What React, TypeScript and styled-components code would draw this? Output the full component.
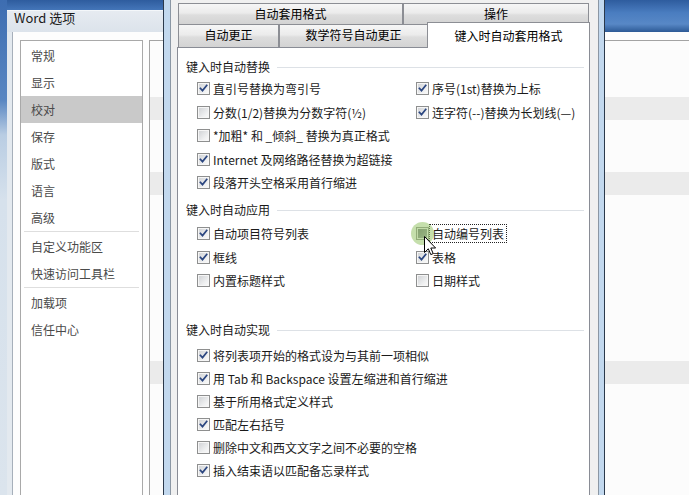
import React from 'react';
import styled, { createGlobalStyle } from 'styled-components';

const GlobalStyle = createGlobalStyle`
  *, *::before, *::after { box-sizing: border-box; }
  html, body { margin: 0; padding: 0; }
  body {
    width: 689px;
    height: 495px;
    overflow: hidden;
    font-family: "Noto Sans CJK SC", "Noto Sans", sans-serif;
    font-size: 12px;
    color: #1a1a1a;
  }
`;

const Screen = styled.div`
  position: relative;
  width: 689px;
  height: 495px;
  overflow: hidden;
`;

/* ---------- background Word Options window ---------- */
const OptionsWindow = styled.div`
  display: flex;
  height: 100%;
`;

const FrameStrip = styled.div`
  width: 7px;
  flex: none;
  background: linear-gradient(#3d6db1 0, #5886c2 100px, #b9cde3 135px, #d6e1ec 200px, #dbe4ed 495px);
`;

const WindowMain = styled.div`
  flex: 1;
  display: flex;
  flex-direction: column;
`;

const TitleBar = styled.div`
  height: 32px;
  flex: none;
  display: flex;
  background: linear-gradient(#2e5c9e, #4a7dc0 40%, #5888c6 75%, #2d5a96);
`;

const TitleGlass = styled.div`
  width: 156px;
  margin-top: 10px;
  padding: 0 0 0 7px;
  background: linear-gradient(#e6ebf1, #dce3eb);
  border-top: 1px solid #f4f7fa;
  font-size: 13px;
  line-height: 13px;
  color: #1b1b1b;
`;

const WindowContent = styled.div`
  flex: 1;
  display: flex;
  background: #e3e9ef;
`;

const ContentInner = styled.div`
  flex: 1;
  display: flex;
  margin-left: 5px;
  padding: 8px 0 0 7px;
  background: #fdfdfd;
  border-left: 1px solid #a6afba;
`;

const Nav = styled.div`
  width: 123px;
  flex: none;
  border: 1px solid #a9a9a9;
  border-bottom: none;
  background: #fff;
  padding-top: 1px;
`;

const NavItem = styled.div<{ $active?: boolean }>`
  height: 27px;
  line-height: 27px;
  padding-left: 10px;
  color: #4a4a4a;
  background: ${(p) => (p.$active ? '#c9c9c9' : 'transparent')};
`;

const NavSeparator = styled.div`
  height: 1px;
  margin: 0 3px 1px;
  background: #dedede;
`;

const OptionsPanel = styled.div`
  flex: 1;
  margin-left: 6px;
  border-left: 1px solid #a3a3a3;
  border-top: 1px solid #a3a3a3;
  background: #fcfcfc;
  padding-top: 56px;
`;

const Band = styled.div<{ $gap: number }>`
  height: 23px;
  margin-top: ${(p) => p.$gap}px;
  background: #ebebeb;
`;

/* ---------- AutoCorrect dialog ---------- */
const Dialog = styled.div`
  position: absolute;
  left: 163px;
  top: 0;
  width: 442px;
  height: 495px;
  border-left: 1px solid #2b394b;
  border-right: 1px solid #2b394b;
  padding: 0 5px 0 6px;
  background: linear-gradient(90deg, #c2d8ee, #d3e4f4 50%, #c2d8ee);
`;

const DialogBody = styled.div`
  height: 100%;
  display: flex;
  flex-direction: column;
  background: #f0f0f0;
  border-left: 1px solid #8b97a4;
  border-right: 1px solid #8b97a4;
  padding: 3px 8px 0 6px;
`;

const TabRow = styled.div<{ $h: number }>`
  display: flex;
  align-items: flex-end;
  height: ${(p) => p.$h}px;
  padding-left: 1px;
`;

const Tab = styled.div<{ $w: number; $active?: boolean }>`
  width: ${(p) => p.$w}px;
  flex: none;
  border: 1px solid #8c8e94;
  border-bottom: none;
  text-align: center;
  color: #000;
  ${(p) =>
    p.$active
      ? `
    height: 26px;
    margin-left: -1px;
    margin-bottom: -1px;
    line-height: 25px;
    background: #fff;
    position: relative;
    z-index: 1;
  `
      : `
    height: 100%;
    line-height: 20px;
    background: linear-gradient(#f6f6f6, #ebebeb 45%, #dddddd 55%, #d3d3d3);
  `}
`;

const TabPage = styled.div`
  flex: 1;
  border: 1px solid #898c95;
  border-bottom: none;
  background: #fff;
  padding-top: 11px;
`;

const SectionHeader = styled.div<{ $gap: number }>`
  display: flex;
  align-items: center;
  height: 16px;
  line-height: 16px;
  margin: ${(p) => p.$gap}px 5px 0 8px;
  color: #1a1a1a;
`;

const Rule = styled.div`
  flex: 1;
  height: 1px;
  margin-left: 7px;
  background: #dde1e6;
`;

const OptionGrid = styled.div<{ $gap: number; $row: number }>`
  display: grid;
  grid-template-columns: 219px 1fr;
  grid-auto-rows: ${(p) => p.$row}px;
  margin-top: ${(p) => p.$gap}px;
  padding-left: 19px;
`;

const Option = styled.div<{ $col?: number }>`
  display: flex;
  align-items: center;
  gap: 3px;
  grid-column: ${(p) => p.$col ?? 1};
  white-space: nowrap;
  color: #1a1a1a;
`;

const Box = styled.span<{ $hover?: boolean }>`
  position: relative;
  flex: none;
  width: 13px;
  height: 13px;
  border: 1px solid #8e8f8f;
  background: #f6f6f6;
  padding: 1px;
  &::after {
    content: '';
    display: block;
    width: 100%;
    height: 100%;
    background: ${(p) =>
      p.$hover
        ? 'linear-gradient(135deg, #6f7478, #9ea3a7)'
        : 'linear-gradient(135deg, #d2d4d7, #eff0f1 70%, #f8f8f8)'};
  }
  ${(p) =>
    p.$hover
      ? `
    &::before {
      content: '';
      position: absolute;
      left: -6px;
      top: -6px;
      width: 23px;
      height: 23px;
      border-radius: 50%;
      background: rgba(150, 196, 104, 0.55);
    }
  `
      : ''}
  svg {
    position: absolute;
    left: 0;
    top: 0;
    z-index: 1;
  }
`;

const Label = styled.span<{ $focus?: boolean }>`
  line-height: 15px;
  ${(p) =>
    p.$focus
      ? `
    outline: 1px dotted #222;
    padding: 1px 2px;
    margin-left: -2px;
  `
      : ''}
`;

const CursorLayer = styled.div`
  position: absolute;
  left: 424px;
  top: 236px;
  width: 14px;
  height: 22px;
  z-index: 5;
`;

const Check = () => (
  <svg width="11" height="11" viewBox="0 0 11 11">
    <path d="M2.4 5.4 L4.5 7.6 L8.7 2.4" fill="none" stroke="#2b4680" strokeWidth="1.7" strokeLinecap="square" />
  </svg>
);

type Opt = { text: string; checked: boolean; col?: number; hover?: boolean; focus?: boolean };

const Checkbox: React.FC<Opt> = ({ text, checked, col, hover, focus }) => (
  <Option $col={col}>
    <Box $hover={hover}>{checked && <Check />}</Box>
    <Label $focus={focus}>{text}</Label>
  </Option>
);

const navItems: (string | null)[] = [
  '常规', '显示', '校对', '保存', '版式', '语言', '高级', null, '自定义功能区', '快速访问工具栏', null, '加载项', '信任中心',
];

export default function App() {
  return (
    <Screen>
      <GlobalStyle />
      <OptionsWindow>
        <FrameStrip />
        <WindowMain>
          <TitleBar>
            <TitleGlass>Word 选项</TitleGlass>
          </TitleBar>
          <WindowContent>
            <ContentInner>
              <Nav>
                {navItems.map((n, i) =>
                  n === null ? <NavSeparator key={i} /> : <NavItem key={i} $active={n === '校对'}>{n}</NavItem>
                )}
              </Nav>
              <OptionsPanel>
                <Band $gap={0} />
                <Band $gap={52} />
                <Band $gap={166} />
              </OptionsPanel>
            </ContentInner>
          </WindowContent>
        </WindowMain>
      </OptionsWindow>

      <Dialog>
        <DialogBody>
          <TabRow $h={21}>
            <Tab $w={225}>自动套用格式</Tab>
            <Tab $w={186}>操作</Tab>
          </TabRow>
          <TabRow $h={23}>
            <Tab $w={101}>自动更正</Tab>
            <Tab $w={149}>数学符号自动更正</Tab>
            <Tab $w={163} $active>键入时自动套用格式</Tab>
          </TabRow>
          <TabPage>
            <SectionHeader $gap={0}>
              键入时自动替换
              <Rule />
            </SectionHeader>
            <OptionGrid $gap={2} $row={23.5}>
              <Checkbox text="直引号替换为弯引号" checked />
              <Checkbox text="序号(1st)替换为上标" checked col={2} />
              <Checkbox text="分数(1/2)替换为分数字符(½)" checked={false} />
              <Checkbox text="连字符(--)替换为长划线(—)" checked col={2} />
              <Checkbox text="*加粗* 和 _倾斜_ 替换为真正格式" checked={false} />
              <Checkbox text="Internet 及网络路径替换为超链接" checked />
              <Checkbox text="段落开头空格采用首行缩进" checked />
            </OptionGrid>

            <SectionHeader $gap={7.5}>
              键入时自动应用
              <Rule />
            </SectionHeader>
            <OptionGrid $gap={4} $row={23.5}>
              <Checkbox text="自动项目符号列表" checked />
              <Checkbox text="自动编号列表" checked={false} col={2} hover focus />
              <Checkbox text="框线" checked />
              <Checkbox text="表格" checked col={2} />
              <Checkbox text="内置标题样式" checked={false} />
              <Checkbox text="日期样式" checked={false} col={2} />
            </OptionGrid>

            <SectionHeader $gap={29.5}>
              键入时自动实现
              <Rule />
            </SectionHeader>
            <OptionGrid $gap={6} $row={23}>
              <Checkbox text="将列表项开始的格式设为与其前一项相似" checked />
              <Checkbox text="用 Tab 和 Backspace 设置左缩进和首行缩进" checked />
              <Checkbox text="基于所用格式定义样式" checked={false} />
              <Checkbox text="匹配左右括号" checked />
              <Checkbox text="删除中文和西文文字之间不必要的空格" checked={false} />
              <Checkbox text="插入结束语以匹配备忘录样式" checked />
            </OptionGrid>
          </TabPage>
        </DialogBody>
      </Dialog>

      <CursorLayer>
        <svg width="14" height="22" viewBox="0 0 14 22">
          <path
            d="M0.5 0.5 L0.5 16.5 L4.3 12.8 L6.8 18.6 L9.2 17.6 L6.8 12 L11.6 12 Z"
            fill="#fff"
            stroke="#000"
            strokeWidth="1"
            strokeLinejoin="miter"
          />
        </svg>
      </CursorLayer>
    </Screen>
  );
}
